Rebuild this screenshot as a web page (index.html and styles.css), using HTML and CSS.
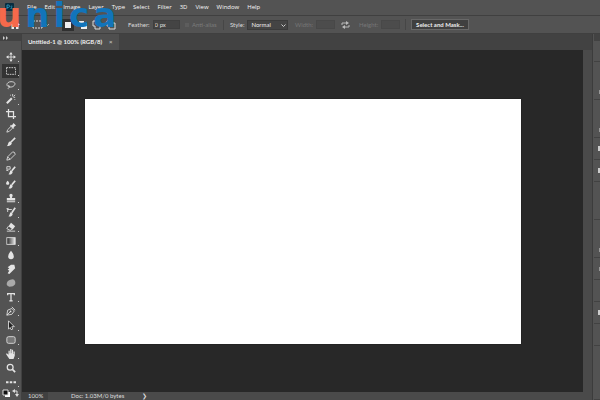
FILE: index.html
```html
<!DOCTYPE html>
<html lang="en">
<head>
<meta charset="utf-8">
<meta name="viewport" content="width=device-width, initial-scale=1">
<title>Untitled-1</title>
<link rel="stylesheet" href="styles.css">
</head>
<body>
<div class="app">
  <nav class="menu">
    <svg class="ps" viewBox="0 0 9 8" aria-hidden="true"><rect width="9" height="8" rx="1" fill="#082d40"/><path d="M2 6V2h1.300a1.200 1.200 0 0 1 0 2.400H2M7.300 3.300C6 2.800 5.500 3.700 6.200 4.200S7.400 5.900 5.500 5.500" fill="none" stroke="#2fa3cf" stroke-width=".8"/></svg>
    <a href="#">File</a><a href="#">Edit</a><a href="#">Image</a><a href="#">Layer</a><a href="#">Type</a><a href="#">Select</a><a href="#">Filter</a><a href="#">3D</a><a href="#">View</a><a href="#">Window</a><a href="#">Help</a>
  </nav>
  <form class="options">
    <div class="presets">
      <svg class="home" viewBox="0 0 10 9" aria-hidden="true"><path d="M5 0 0 5h1.500v4H4V6h2v3h2.500V5H10z" fill="#eee"/></svg>
      <svg class="marquee" viewBox="0 0 18 9" aria-hidden="true"><rect x="1" y="1" width="9" height="7" fill="none" stroke="#ddd" stroke-dasharray="2 1"/><path d="m14 4 1.500 1.500L17 4" fill="none" stroke="#bbb" stroke-width=".8"/></svg>
      <svg class="modes" viewBox="0 0 54 12" aria-hidden="true"><rect width="12" height="12" fill="#303030"/><path d="M3 3h6v6H3zM17 2h5v2h3v6h-6V7h-2z" fill="#eee"/><path d="M31 2h4v2h3v6h-5V7h-2zM45 2h5v2h3v6h-6V7h-2zM47 4h3v3h-3z" fill="none" stroke="#ddd"/></svg>
    </div>
    <label class="feather">Feather: <input type="text" value="0 px"></label>
    <label class="anti"><input type="checkbox" disabled>Anti-alias</label>
    <label class="style">Style: <span class="pick"><select><option>Normal</option></select><svg viewBox="0 0 5 3" aria-hidden="true"><path d="m.5.5 2 2 2-2" fill="none" stroke="#ccc"/></svg></span></label>
    <label class="dim">Width: <input type="text" disabled></label>
    <svg class="swap" viewBox="0 0 9 8" aria-hidden="true"><path d="M1 4V2h5M8 4v2H3" fill="none" stroke="#bbb"/><path d="m5 0 3 2-3 2zM4 4 1 6l3 2z" fill="#bbb"/></svg>
    <label class="dim">Height: <input type="text" disabled></label>
    <div class="mask"><button type="button">Select and Mask...</button></div>
  </form>
  <main class="workspace">
    <aside class="tools" aria-label="Tools">
      <div class="toolhead"><svg viewBox="0 0 6 4" aria-hidden="true"><path d="m0 0 2 2-2 2zM3 0l2 2-2 2z" fill="#ccc"/></svg></div>
      <div class="toollist">
        <button aria-label="Move"><svg viewBox="0 0 12 12"><path d="M6 2v8M2 6h8"/><path class="f" d="m6 0 2 3H4zM6 12l2-3H4zM0 6l3-2v4zM12 6 9 4v4z"/></svg></button>
        <button class="on" aria-label="Marquee"><svg viewBox="0 0 12 12"><rect x="0.500" y="2" width="11" height="8" stroke-dasharray="2 1"/></svg></button>
        <button aria-label="Lasso"><svg viewBox="0 0 12 12"><path d="M3 8C-1 6 2 2 6 2s6 2 4 4.500S4 9 3 7.500s2-1 1 1S2 10 3 11"/></svg></button>
        <button aria-label="Magic wand"><svg viewBox="0 0 12 12"><path d="m1 11 6-6" stroke-width="2.500"/><path d="M8 0v3M11 4H9M11 1 9 3M5 1l1 1M10 6l1 1"/></svg></button>
        <button class="s" aria-label="Crop"><svg viewBox="0 0 12 12"><path d="M3 0v9h9M0 3h9v9" stroke-width="1.500"/></svg></button>
        <button class="s" aria-label="Eyedropper"><svg viewBox="0 0 12 12"><path d="m1 11 1-3 4-4 2 2-4 4z"/><path class="f" d="m5 3 1-1 1 1 2-3 3 3-3 2 1 1-1 1z"/></svg></button>
        <button class="s" aria-label="Brush"><svg viewBox="0 0 12 12"><path d="m6 6 5-5" stroke-width="2"/><path class="f" d="M5 5 7 7c0 3-3 4-6 4 2-2 1-5 4-6z"/></svg></button>
        <button class="s" aria-label="Pencil"><svg viewBox="0 0 12 12"><path d="m1 11 1-4 6-6q3 0 3 3l-6 6zM2 7l3 3"/></svg></button>
        <button class="s" aria-label="Color replacement"><svg viewBox="0 0 12 12"><path d="m7 7 4-5" stroke-width="2"/><path class="f" d="m6 6 2 2c0 3-3 4-5 3 2-1 1-4 3-5z"/><path d="M1 5V2h4v3zM0 6l3 1"/></svg></button>
        <button class="s" aria-label="Mixer brush"><svg viewBox="0 0 12 12"><path d="m7 7 4-5" stroke-width="2"/><path class="f" d="m6 6 2 2c0 3-3 4-5 3 2-1 1-4 3-5zM2 2c3 3 2 5 0 5S-1 5 2 2z"/></svg></button>
        <button aria-label="Clone stamp"><svg viewBox="0 0 12 12"><path class="f" d="M5 6 4 3q0-2 2-2t2 2L7 6h4v3H1V6zM1 10h10v1H1z"/></svg></button>
        <button aria-label="History brush"><svg viewBox="0 0 12 12"><path d="m7 7 4-6" stroke-width="2"/><path class="f" d="m6 6 2 2c0 3-3 4-5 3 2-1 1-4 3-5zM0 2l3-1v3z"/><path d="M2 3h5M2 3v3"/></svg></button>
        <button aria-label="Eraser"><svg viewBox="0 0 12 12"><path class="f" d="m6 1 5 4-3 4-5-4z"/><path d="m3 5-2 3 4 2 3-2M1 11h10"/></svg></button>
        <button aria-label="Gradient"><svg viewBox="0 0 12 12"><defs><linearGradient id="g"><stop stop-color="#222"/><stop offset="1" stop-color="#eee"/></linearGradient></defs><rect x="1" y="2" width="10" height="8" fill="url(#g)"/></svg></button>
        <button class="s" aria-label="Blur"><svg viewBox="0 0 12 12"><path class="f" d="M6 1c5 6 4 10 0 10S1 7 6 1z"/></svg></button>
        <button class="s" aria-label="Smudge"><svg viewBox="0 0 12 12"><path class="f" d="M2 4 6 1h4l1 4-3 3-4 4-2-1 2-3-2-1 2-2z"/></svg></button>
        <button class="s" aria-label="Sponge"><svg viewBox="0 0 12 12"><path class="f g" d="M1 6Q2 2 8 1.500q4 1 3 6-2 3-7 3Q0 9 1 6z"/></svg></button>
        <button aria-label="Type"><svg viewBox="0 0 12 12"><path d="M2 4V2h8v2M6 2v9M4 10.500h4" stroke-width="1.500"/></svg></button>
        <button aria-label="Pen"><svg viewBox="0 0 12 12"><path d="m1 11 1-6 5-2 3 3-3 4zM1 11l4-4M7 1l4 4"/><circle class="f" cx="5.500" cy="6.500" r="1"/></svg></button>
        <button aria-label="Path selection"><svg viewBox="0 0 12 12"><path class="k" d="m3 1 7 7H7l1 3-2 .5L5 9l-2 2z"/></svg></button>
        <button aria-label="Rounded rectangle"><svg viewBox="0 0 12 12"><rect class="r" x="1" y="2" width="10" height="8" rx="2"/></svg></button>
        <button aria-label="Hand"><svg viewBox="0 0 12 12"><path class="f" d="m0 6 1-1 2 2V2h1.500v3H5V0h1.500v5H7V1h1.500v5H9V3h1.500v5L9 12H4z"/></svg></button>
        <button class="s" aria-label="Zoom"><svg viewBox="0 0 12 12"><circle cx="5" cy="5" r="3.500" stroke-width="1.500"/><path d="m8 8 3 3" stroke-width="2"/></svg></button>
        <button aria-label="More tools"><svg viewBox="0 0 12 12"><path class="f" d="M0 5h3v2.500H0zM4.500 5h3v2.500h-3zM9 5h3v2.500H9z"/></svg></button>
      </div>
      <svg class="swatches" viewBox="0 0 22 11" aria-hidden="true"><path d="M5 3h5v5H5z" fill="#fff"/><path d="M3 1h5v5H3z" fill="#111" stroke="#ddd"/><path d="M14 2h3v4" fill="none" stroke="#ddd"/><path d="m12 2 3-2v4zM17 8l-2-3h4z" fill="#ddd"/></svg>
    </aside>
    <section class="document">
      <div class="tabs"><div class="tab">Untitled-1 @ 100% (RGB/8) <button aria-label="Close">×</button></div></div>
      <div class="view"><div class="paper"></div></div>
      <footer class="status"><span class="pct">100%</span><span class="doc">Doc: 1.03M/0 bytes</span><span>❯</span></footer>
    </section>
    <aside class="dock" aria-label="Panels">
      <div class="head"></div>
      <div class="p20"></div>
      <div class="p38"><i></i></div>
      <div class="p38"><i></i></div>
      <div class="p22"><i class="w"></i></div>
      <div class="p22"><i class="w"></i></div>
      <div class="p38"></div>
      <div class="p38"><i></i></div>
      <div class="p22"><i></i></div>
      <div class="p22"></div>
      <div class="p22"><i class="w"></i></div>
      <div class="p22"></div>
      <div class="rest"></div>
    </aside>
  </main>
  <div class="brand" aria-label="unica"><span class="u">u</span><span>n</span><span>i</span><span>c</span><span>a</span></div>
</div>
</body>
</html>
```
FILE: styles.css
```css
* { box-sizing: border-box; }
body { margin: 0; background: #535353; color: #ddd; font: 6px/8px "Open Sans", sans-serif; }
.app { position: relative; display: flex; flex-direction: column; height: 100vh; overflow: hidden; }
button, input, select { margin: 0; padding: 0; border: 0; border-radius: 0; font: inherit; color: inherit; background: none; appearance: none; }
svg { display: block; flex: none; }
.menu { display: flex; align-items: center; gap: 8px; height: 16px; padding-left: 5px; padding-bottom: 2px; border-bottom: 1px solid #404040; }
.menu a { color: #f8f8f8; text-decoration: none; }
.ps { width: 9px; height: 8px; margin-right: 5px; }
.options { display: flex; align-items: center; height: 18px; border-bottom: 1px solid #404040; font-family: Lato, sans-serif; white-space: nowrap; }
.presets { display: flex; align-items: center; width: 123px; padding-left: 10px; gap: 12px; }
.home { width: 10px; height: 9px; }
.marquee { width: 18px; height: 9px; }
.modes { width: 54px; height: 12px; }
.options label { display: flex; align-items: center; gap: 3px; }
.options input[type="text"] { width: 27px; height: 9px; padding-left: 1px; background: #444; border: 1px solid #3f3f3f; }
.feather { width: 62px; padding-left: 5px; }
.anti { width: 38px; color: #7c7c7c; }
.anti input { width: 4px; height: 4px; background: #5d5d5d; }
.style { width: 72px; padding-left: 6px; border-left: 1px solid #464646; }
.pick { position: relative; }
.pick select { display: block; width: 41px; height: 10px; padding-left: 3px; border: 1px solid #3b3b3b; background: #444; color: #eee; }
.pick svg { position: absolute; right: 2px; top: 4px; width: 5px; height: 3px; pointer-events: none; }
.dim { color: #777; width: 41px; }
.options .dim input { width: 19px; background: #4c4c4c; border-color: #484848; }
.swap { width: 9px; height: 8px; margin: 0 9px 0 5px; }
.mask { margin-left: 5px; padding-left: 5px; border-left: 1px solid #464646; }
.mask button { height: 11px; width: 58px; border: 1px solid #686868; background: #3f3f3f; color: #eee; font-weight: bold; line-height: 9px; }
.workspace { display: flex; flex: 1; min-height: 0; }
.tools { display: flex; flex-direction: column; width: 22px; border-right: 1px solid #414141; }
.toolhead { height: 7px; padding: 2px 3px; background: #424242; }
.toolhead svg { width: 6px; height: 4px; }
.toollist { display: flex; flex-direction: column; flex: 1; padding-top: 9px; }
.toollist button { position: relative; display: flex; flex: 1; min-height: 0; align-items: center; justify-content: center; margin: 0 2px 0 2px; }
.toollist .on { background: #333; }
.toollist svg { width: 10px; height: 10px; fill: none; stroke: #e4e4e4; }
.toollist .f { fill: #e4e4e4; stroke: none; }
.toollist .g { fill: #aaa; }
.toollist .k { fill: #222; }
.toollist .r { fill: #777; }
.toollist button:not(.s)::after { content: ""; position: absolute; right: 0; bottom: 2px; width: 1px; height: 1px; background: #ccc; }
.swatches { width: 22px; height: 11px; }
.document { display: flex; flex: 1; flex-direction: column; min-width: 0; border-right: 1px solid #3c3c3c; background: #4a4a4a; }
.tabs { display: flex; height: 16px; background: #424242; }
.tab { display: flex; align-items: center; gap: 7px; padding: 0 6px; background: #4f4f4f; color: #eee; font-family: Lato, sans-serif; font-weight: bold; white-space: nowrap; }
.tab button { color: #bbb; }
.view { display: flex; flex: 1; margin-right: 9px; padding: 49px 62px 48px 63px; background: #282828; }
.paper { flex: 1; background: #fff; box-shadow: 0 0 1px #111; }
.status { display: flex; align-items: center; height: 8px; background: #4a4a4a; font-family: Lato, sans-serif; }
.pct { align-self: stretch; width: 26px; padding-left: 6px; background: #404040; }
.doc { width: 94px; padding-left: 23px; }
.dock { display: flex; flex-direction: column; width: 7px; padding-left: 1px; }
.dock div { display: flex; align-items: center; justify-content: flex-end; border-bottom: 1px solid #424242; }
.dock .head { height: 7px; background: #424242; }
.p20 { height: 21px; }
.p38 { height: 38px; }
.p22 { height: 22px; }
.rest { flex: 1; }
.dock i { width: 1px; height: 4px; background: #999; }
.dock .p38 i { align-self: flex-end; margin-bottom: 5px; }
.dock .w { width: 2px; height: 5px; background: #ccc; }
.brand { position: absolute; top: 0; left: -3px; display: flex; gap: 4px; color: #1274ba; font: bold 34px/30px "DejaVu Sans", sans-serif; pointer-events: none; }
.u { color: #f5694b; }
```
